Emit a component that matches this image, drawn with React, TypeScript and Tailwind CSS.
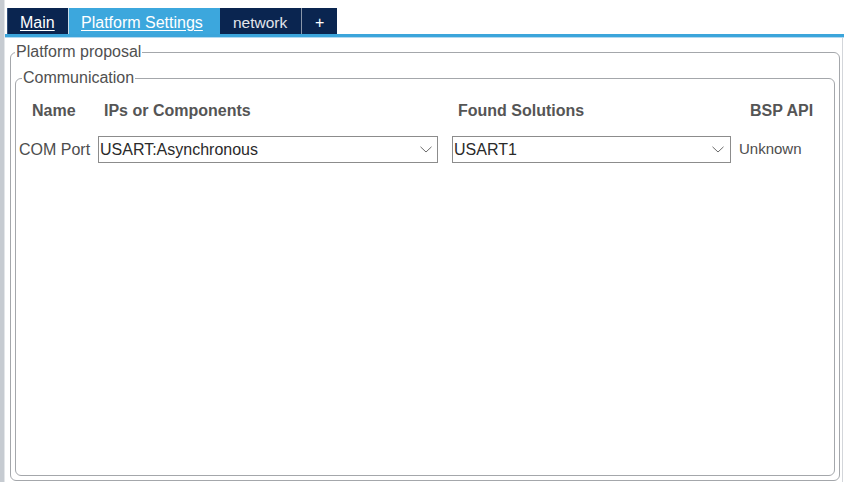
import React from "react";

function Chevron() {
  return (
    <svg width="12" height="7" viewBox="0 0 12 7" className="shrink-0">
      <path d="M0.5 0.8 L6 6 L11.5 0.8" fill="none" stroke="#6b6b6b" strokeWidth="1" />
    </svg>
  );
}

function Select({ value, w, pr }: { value: string; w: string; pr: string }) {
  return (
    <div className={`${w} h-[27px] border border-[#8c8c8c] bg-white flex items-center pl-[1px] ${pr} text-[16px] leading-[18px] text-[#2a2a2a]`}>
      <span className="flex-1">{value}</span>
      <Chevron />
    </div>
  );
}

export default function App() {
  return (
    <div className="w-[844px] h-[482px] flex bg-white overflow-hidden font-['Liberation_Sans',Arial,sans-serif]">
      <div className="w-[4px] bg-[#c6cbd1]" />
      <div className="w-px bg-[#e3e6e9]" />
      <div className="flex-1 flex flex-col pt-[8px]">
        {/* Tabs */}
        <div className="h-[26px] flex pl-[2px] text-[16px] leading-[18px]">
          <div className="w-[61px] bg-[#0a2550] text-white pt-[6px] pl-[12px] underline underline-offset-[2px] border-l border-[#33507a]">
            Main
          </div>
          <div className="w-px bg-[#c9dcea]" />
          <div className="w-[151px] bg-[#3ca7dd] text-white pt-[6px] pl-[12px] underline underline-offset-[2px]">
            Platform Settings
          </div>
          <div className="w-[81px] bg-[#0a2550] text-[#e2e6ec] pt-[6px] pl-[13px] text-[15.5px]">network</div>
          <div className="w-px bg-[#8a97aa]" />
          <div className="w-[35px] bg-[#0a2550] text-white pt-[6px] pl-[13px]">+</div>
        </div>
        <div className="h-[3px] bg-[#3ba5db]" />
        <div className="h-px bg-[#b3d9f0]" />
        {/* Content */}
        <div className="flex-1 flex">
          <fieldset className="flex-1 mt-[5px] mb-[1px] ml-[5px] mr-[2px] border border-[#a4a7ab] rounded-[6px] flex flex-col">
            <legend className="ml-[4px] px-[1px] text-[16px] leading-[18px] text-[#505050]">Platform proposal</legend>
            <fieldset className="flex-1 mt-[8px] mb-[4px] mx-[4px] border border-[#a4a7ab] rounded-[6px]">
              <legend className="ml-[6px] px-[1px] text-[16px] leading-[18px] text-[#505050]">Communication</legend>
              <div className="pl-[3px] pt-[15px]">
                <div className="flex text-[16px] leading-[18px] font-bold text-[#555555]">
                  <div className="w-[79px] pl-[13px]">Name</div>
                  <div className="w-[354px] pl-[6px]">IPs or Components</div>
                  <div className="w-[286px] pl-[6px]">Found Solutions</div>
                  <div className="pl-[12px]">BSP API</div>
                </div>
                <div className="flex items-center mt-[16px]">
                  <div className="w-[79px] text-[16px] leading-[18px] text-[#4d4d4d]">COM Port</div>
                  <Select value="USART:Asynchronous" w="w-[340px]" pr="pr-[5px]" />
                  <div className="w-[14px]" />
                  <Select value="USART1" w="w-[279px]" pr="pr-[6px]" />
                  <div className="pl-[8px] text-[15px] leading-[18px] text-[#4d4d4d] -mt-px">Unknown</div>
                </div>
              </div>
            </fieldset>
          </fieldset>
          <div className="w-px bg-[#d3d6da]" />
          <div className="w-px" />
        </div>
      </div>
    </div>
  );
}
